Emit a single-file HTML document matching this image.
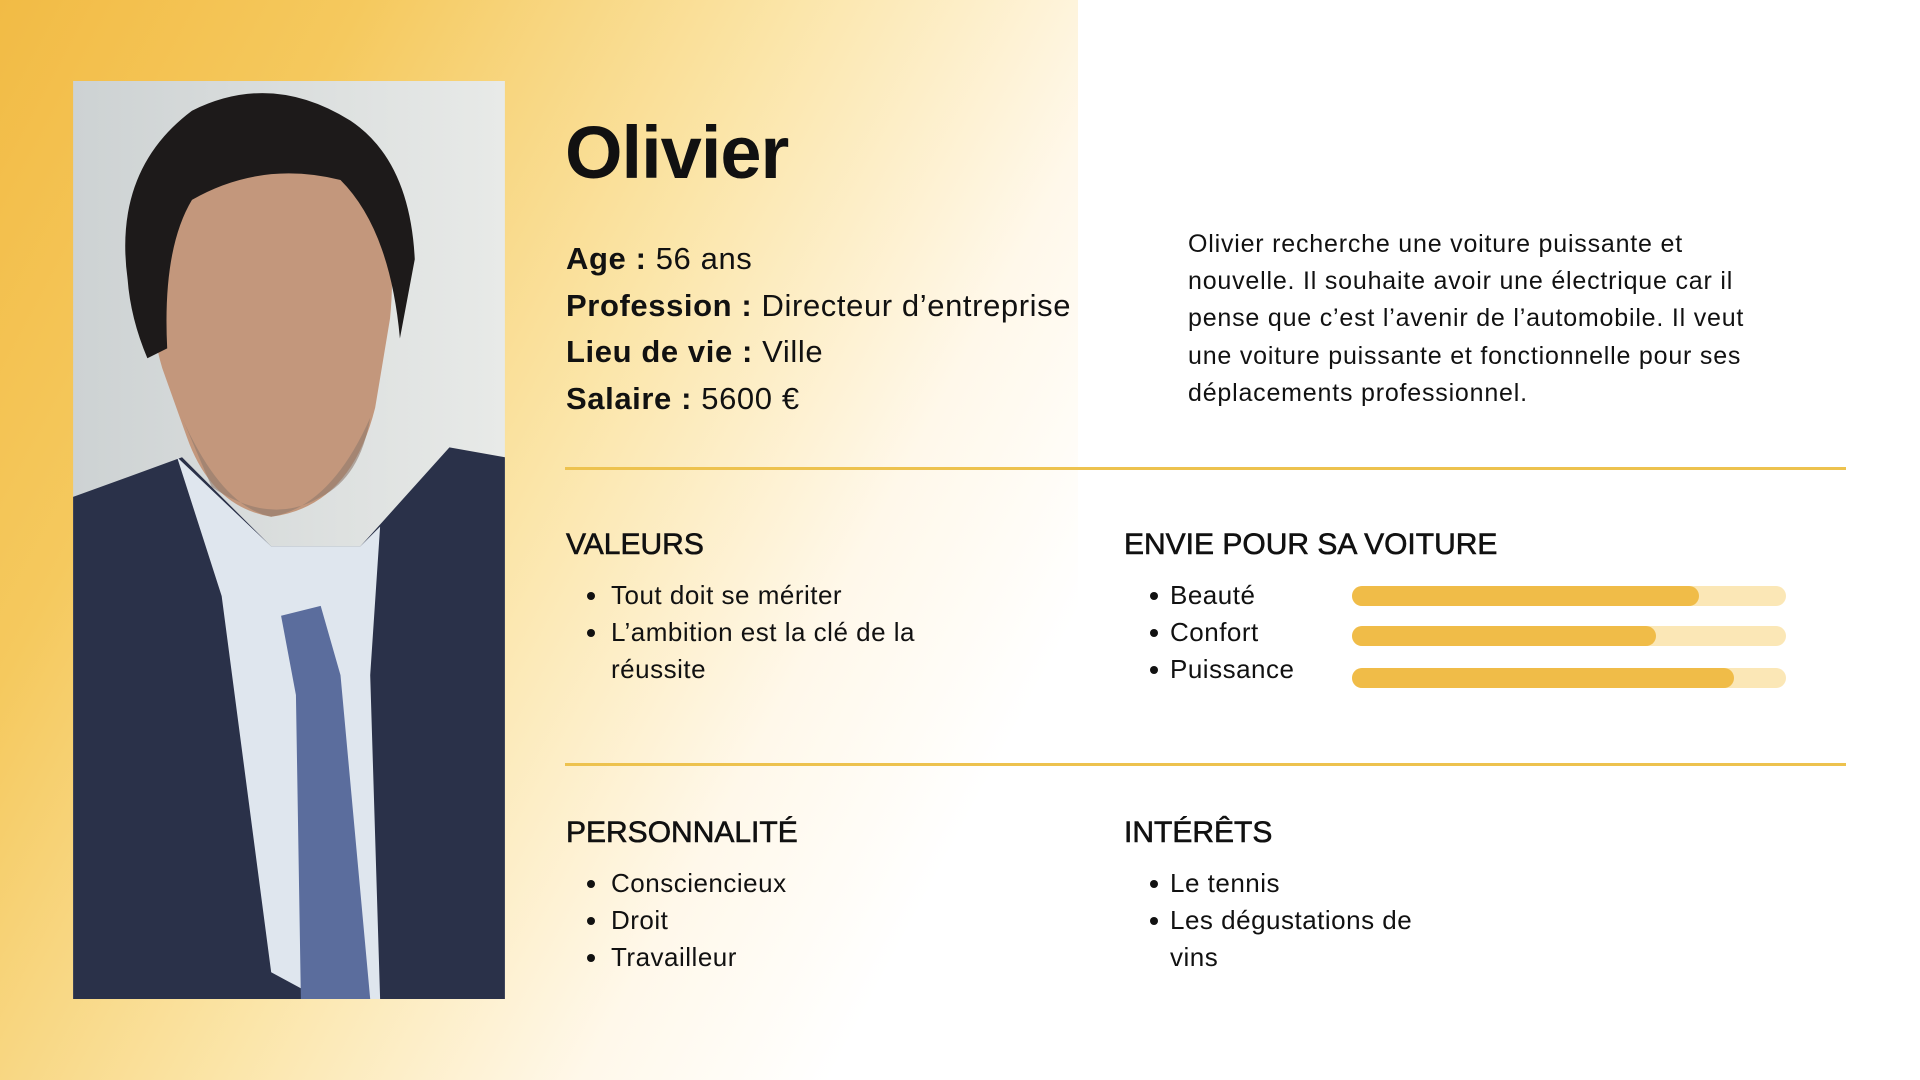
<!DOCTYPE html>
<html><head><meta charset="utf-8"><style>
*{margin:0;padding:0;box-sizing:border-box}
body{width:1920px;height:1080px;position:relative;overflow:hidden;background:#fff;font-family:"Liberation Sans","DejaVu Sans",sans-serif;color:#111}
.left{position:absolute;left:0;top:0;width:1078px;height:1080px;background:linear-gradient(118deg,#F2BB45 0%,#F5C95E 22%,#FBE5A8 48%,#FFF8EA 70%,#fff 85%)}
.t{position:absolute;white-space:nowrap}
.line{position:absolute;left:565px;width:1281px;height:3px;background:#EDC24E}
.h{font-size:30px;font-weight:normal;-webkit-text-stroke:.6px #111}
.li{font-size:26px;letter-spacing:.5px}
.dot{position:absolute;width:8px;height:8px;border-radius:50%;background:#111}
.track{position:absolute;left:1352px;width:434px;height:20px;border-radius:10px;background:#FBE7B6}
.fill{position:absolute;left:0;top:0;height:20px;border-radius:10px;background:#F0BC48}
.info{font-size:31px;line-height:46.5px;letter-spacing:.6px}
.info b{font-weight:bold}
</style></head><body>
<div class="left"></div>
<svg style="position:absolute;left:73px;top:81px" width="432" height="918" viewBox="0 0 436 927">
<defs><linearGradient id="bg" x1="0" x2="1"><stop offset="0" stop-color="#cdd2d3"/><stop offset="1" stop-color="#e8eae8"/></linearGradient></defs>
<rect width="436" height="927" fill="url(#bg)"/>
<path d="M0 420 L110 380 L200 470 L290 470 L380 370 L436 380 L436 927 L0 927Z" fill="#2a3149"/>
<path d="M105 380 L150 520 L200 900 L250 927 L310 927 L300 600 L310 450 L290 470 L200 470Z" fill="#dfe6ee"/>
<path d="M210 540 L250 530 L270 600 L300 927 L230 927 L225 620Z" fill="#5b6d9d"/>
<path d="M80 180 Q75 90 150 60 Q230 40 290 90 Q330 140 320 240 L305 330 Q280 430 200 440 Q140 430 115 360 L90 290 Q75 240 80 180Z" fill="#c3977c"/>
<path d="M55 200 Q40 90 120 30 Q200 -10 280 40 Q340 80 345 180 L330 260 Q320 150 270 100 Q190 80 120 120 Q90 170 95 270 L75 280 Q58 240 55 200Z" fill="#1d1a1a"/>
<path d="M110 340 Q150 430 200 440 Q260 430 300 340 Q290 400 250 420 Q200 450 140 410Z" fill="#8f7a6c" opacity=".6"/>
</svg>
<div class="t" style="left:565px;top:110px;font-size:74px;font-weight:bold;letter-spacing:-1px">Olivier</div>
<div class="t info" style="left:566px;top:236px">
<div><b>Age :</b> 56 ans</div>
<div><b>Profession :</b> Directeur d’entreprise</div>
<div><b>Lieu de vie :</b> Ville</div>
<div><b>Salaire :</b> 5600 €</div>
</div>
<div class="t" style="left:1188px;top:226px;font-size:25px;letter-spacing:.8px;line-height:37.2px">Olivier recherche une voiture puissante et<br>nouvelle. Il souhaite avoir une électrique car il<br>pense que c’est l’avenir de l’automobile. Il veut<br>une voiture puissante et fonctionnelle pour ses<br>déplacements professionnel.</div>
<div class="line" style="top:467px"></div>
<div class="line" style="top:763px"></div>
<div class="t h" style="left:566px;top:528px">VALEURS</div>
<div class="t h" style="left:1124px;top:528px">ENVIE POUR SA VOITURE</div>
<div class="t h" style="left:566px;top:816px">PERSONNALITÉ</div>
<div class="t h" style="left:1124px;top:816px">INTÉRÊTS</div>

<div class="dot" style="left:587px;top:592px"></div><div class="t li" style="left:611px;top:580px">Tout doit se mériter</div>
<div class="dot" style="left:587px;top:629px"></div><div class="t li" style="left:611px;top:617px">L’ambition est la clé de la</div>
<div class="t li" style="left:611px;top:654px">réussite</div>

<div class="dot" style="left:1150px;top:592px"></div><div class="t li" style="left:1170px;top:580px">Beauté</div>
<div class="dot" style="left:1150px;top:629px"></div><div class="t li" style="left:1170px;top:617px">Confort</div>
<div class="dot" style="left:1150px;top:666px"></div><div class="t li" style="left:1170px;top:654px">Puissance</div>
<div class="track" style="top:586px"><div class="fill" style="width:347px"></div></div>
<div class="track" style="top:626px"><div class="fill" style="width:304px"></div></div>
<div class="track" style="top:668px"><div class="fill" style="width:382px"></div></div>

<div class="dot" style="left:587px;top:880px"></div><div class="t li" style="left:611px;top:868px">Consciencieux</div>
<div class="dot" style="left:587px;top:917px"></div><div class="t li" style="left:611px;top:905px">Droit</div>
<div class="dot" style="left:587px;top:954px"></div><div class="t li" style="left:611px;top:942px">Travailleur</div>

<div class="dot" style="left:1150px;top:880px"></div><div class="t li" style="left:1170px;top:868px">Le tennis</div>
<div class="dot" style="left:1150px;top:917px"></div><div class="t li" style="left:1170px;top:905px">Les dégustations de</div>
<div class="t li" style="left:1170px;top:942px">vins</div>
</body></html>
